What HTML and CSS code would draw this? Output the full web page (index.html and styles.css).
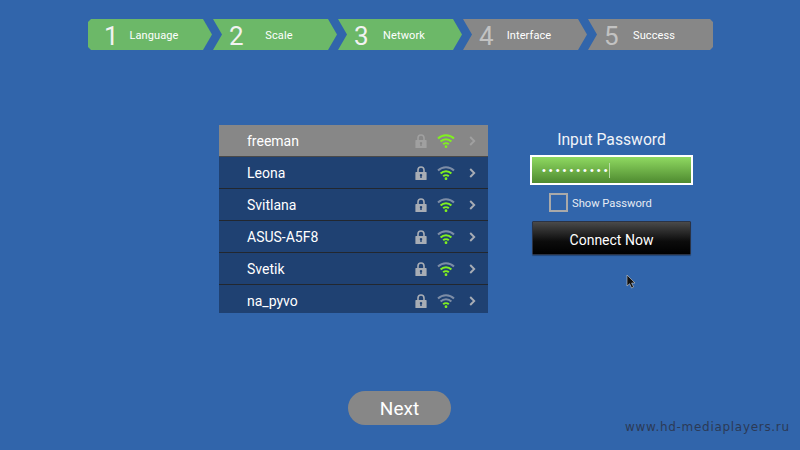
FILE: index.html
```html
<!DOCTYPE html>
<html lang="en">
<head>
    <meta charset="UTF-8">
    <title>Network setup</title>
    <link rel="stylesheet" href="styles.css">
</head>
<body>
    <svg class="defs" width="0" height="0">
        <symbol id="lock" viewBox="0 0 12 14">
            <path d="M3 6V4a3 3 0 0 1 6 0v2" fill="none" stroke="currentColor" stroke-width="1.6"/>
            <path fill-rule="evenodd" d="M1 6h10a.6.6 0 0 1 .6.6v6.800a.6.6 0 0 1-.6.6H1a.6.6 0 0 1-.6-.6V6.600A.6.6 0 0 1 1 6zM6 8a1.200 1.200 0 0 0-.7 2.200V12h1.400v-1.800A1.200 1.200 0 0 0 6 8z" fill="currentColor"/>
        </symbol>
        <symbol id="chev" viewBox="0 0 7 10">
            <path d="M1.200 1l4 4-4 4" fill="none" stroke="currentColor" stroke-width="1.900"/>
        </symbol>
    </svg>

    <div class="steps">
        <div class="step done"><span class="num">1</span><span class="label">Language</span></div>
        <div class="step done"><span class="num">2</span><span class="label">Scale</span></div>
        <div class="step done"><span class="num">3</span><span class="label">Network</span></div>
        <div class="step"><span class="num">4</span><span class="label">Interface</span></div>
        <div class="step last"><span class="num">5</span><span class="label">Success</span></div>
    </div>

    <div class="main">
        <ul class="wifi-list">
            <li class="active">
                <span class="name">freeman</span>
                <svg class="lock"><use href="#lock"/></svg>
                <svg class="wifi" viewBox="0 0 18 14"><path class="arc on" d="M1 4.500a11.500 11.500 0 0 1 16 0"/><path class="arc on" d="M3.600 7.500a7.600 7.600 0 0 1 10.800 0"/><path class="arc on" d="M6.200 10.300a4 4 0 0 1 5.600 0"/><circle class="dot" cx="9" cy="12.700" r="1.400"/></svg>
                <svg class="chev"><use href="#chev"/></svg>
            </li>
            <li>
                <span class="name">Leona</span>
                <svg class="lock"><use href="#lock"/></svg>
                <svg class="wifi" viewBox="0 0 18 14"><path class="arc" d="M1 4.500a11.500 11.500 0 0 1 16 0"/><path class="arc on" d="M3.600 7.500a7.600 7.600 0 0 1 10.800 0"/><path class="arc on" d="M6.200 10.300a4 4 0 0 1 5.600 0"/><circle class="dot" cx="9" cy="12.700" r="1.400"/></svg>
                <svg class="chev"><use href="#chev"/></svg>
            </li>
            <li>
                <span class="name">Svitlana</span>
                <svg class="lock"><use href="#lock"/></svg>
                <svg class="wifi" viewBox="0 0 18 14"><path class="arc" d="M1 4.500a11.500 11.500 0 0 1 16 0"/><path class="arc on" d="M3.600 7.500a7.600 7.600 0 0 1 10.800 0"/><path class="arc on" d="M6.200 10.300a4 4 0 0 1 5.600 0"/><circle class="dot" cx="9" cy="12.700" r="1.400"/></svg>
                <svg class="chev"><use href="#chev"/></svg>
            </li>
            <li>
                <span class="name">ASUS-A5F8</span>
                <svg class="lock"><use href="#lock"/></svg>
                <svg class="wifi" viewBox="0 0 18 14"><path class="arc" d="M1 4.500a11.500 11.500 0 0 1 16 0"/><path class="arc on" d="M3.600 7.500a7.600 7.600 0 0 1 10.800 0"/><path class="arc on" d="M6.200 10.300a4 4 0 0 1 5.600 0"/><circle class="dot" cx="9" cy="12.700" r="1.400"/></svg>
                <svg class="chev"><use href="#chev"/></svg>
            </li>
            <li>
                <span class="name">Svetik</span>
                <svg class="lock"><use href="#lock"/></svg>
                <svg class="wifi" viewBox="0 0 18 14"><path class="arc" d="M1 4.500a11.500 11.500 0 0 1 16 0"/><path class="arc on" d="M3.600 7.500a7.600 7.600 0 0 1 10.800 0"/><path class="arc on" d="M6.200 10.300a4 4 0 0 1 5.600 0"/><circle class="dot" cx="9" cy="12.700" r="1.400"/></svg>
                <svg class="chev"><use href="#chev"/></svg>
            </li>
            <li>
                <span class="name">na_pyvo</span>
                <svg class="lock"><use href="#lock"/></svg>
                <svg class="wifi" viewBox="0 0 18 14"><path class="arc" d="M1 4.500a11.500 11.500 0 0 1 16 0"/><path class="arc" d="M3.600 7.500a7.600 7.600 0 0 1 10.800 0"/><path class="arc on" d="M6.200 10.300a4 4 0 0 1 5.600 0"/><circle class="dot" cx="9" cy="12.700" r="1.400"/></svg>
                <svg class="chev"><use href="#chev"/></svg>
            </li>
        </ul>

        <div class="panel">
            <div class="panel-title">Input Password</div>
            <div class="pass-field"><span class="dots">••••••••••</span><span class="caret"></span></div>
            <div class="show-row"><span class="checkbox"></span><span class="show-text">Show Password</span></div>
            <div class="connect-btn">Connect Now</div>
        </div>
    </div>

    <div class="next-btn">Next</div>

    <svg class="pointer" width="11" height="16" viewBox="0 0 11 16"><path d="M1 1v11l2.600-2.300 2 4.300 2-1-2-4h3.400z" fill="#111" stroke="#ccc" stroke-width=".6"/></svg>
    <div class="watermark">www.hd-mediaplayers.ru</div>
</body>
</html>
```

FILE: styles.css
```css
body {
    margin: 0;
    width: 800px;
    height: 450px;
    overflow: hidden;
    position: relative;
    background: #3165ab;
    color: #fff;
    font-family: Roboto, sans-serif;
    display: flex;
    flex-direction: column;
    align-items: flex-start;
}
.defs { position: absolute; }

/* top wizard */
.steps {
    display: flex;
    margin: 19px 0 0 88px;
}
.step {
    width: 125px;
    height: 31px;
    box-sizing: border-box;
    padding-top: 2px;
    display: flex;
    align-items: center;
    background: #878787;
    clip-path: polygon(0 0, 115px 0, 124px 50%, 115px 100%, 0 100%, 9px 50%);
    font-size: 11px;
}
.step.done { background: #6cb868; }
.step:first-child {
    clip-path: polygon(3px 0, 115px 0, 124px 50%, 115px 100%, 3px 100%, 0 calc(100% - 3px), 0 3px);
}
.step.last {
    clip-path: polygon(0 0, 122px 0, 125px 3px, 125px 28px, 122px 100%, 0 100%, 9px 50%);
}
.num {
    width: 32px;
    padding-left: 16px;
    box-sizing: border-box;
    font-size: 26px;
    color: #f2f2f2;
}
.step:not(.done) .num { color: #c2c2c2; }
.label {
    flex: 0 0 70px;
    margin-left: -1px;
    text-align: center;
    letter-spacing: 0.1px;
}

/* network list + password */
.main {
    display: flex;
    align-items: flex-start;
    margin: 75px 0 0 219px;
}
.wifi-list {
    list-style: none;
    margin: 0;
    padding: 0;
    width: 269px;
    height: 188px;
    overflow: hidden;
}
.wifi-list li {
    height: 31px;
    border-bottom: 1px solid #22272f;
    background: #1f4172;
    display: flex;
    align-items: center;
    padding-left: 28px;
    color: #a8adb5;
}
.wifi-list li.active {
    background: #878787;
    border-bottom-color: #4a4a4a;
    color: #a0a0a0;
}
.name {
    flex: 1;
    padding-top: 1px;
    font-size: 14px;
    color: #fff;
}
.lock { width: 12px; height: 14px; }
.wifi { width: 18px; height: 14px; margin-left: 10px; }
.chev { width: 7px; height: 10px; margin: 0 12px 0 14px; }
.arc { fill: none; stroke: #7d8da6; stroke-width: 2; }
.arc.on { stroke: #80f020; }
.dot { fill: #80f020; }

.panel {
    width: 163px;
    margin-left: 42px;
    display: flex;
    flex-direction: column;
    align-items: center;
}
.panel-title {
    font-size: 15.7px;
    line-height: 18px;
    margin: 6px 0 6px;
    color: #f0f3f8;
}
.pass-field {
    width: 163px;
    height: 30px;
    box-sizing: border-box;
    border: 2px solid #fff;
    background: linear-gradient(to bottom, #8fd961, #4e8a30);
    display: flex;
    align-items: center;
    padding-left: 10px;
}
.dots {
    font-size: 11px;
    letter-spacing: 3px;
    font-family: "Liberation Sans", sans-serif;
}
.caret {
    width: 1px;
    height: 15px;
    background: #b9dca6;
    margin-left: -2px;
}
.show-row {
    display: flex;
    align-items: center;
    align-self: flex-start;
    margin: 8px 0 0 19px;
    font-size: 11.2px;
    color: #e6ebf3;
}
.show-text { padding-top: 2px; }
.checkbox {
    width: 19px;
    height: 19px;
    box-sizing: border-box;
    border: 2px solid #a9a9a9;
    margin-right: 4px;
}
.connect-btn {
    width: 159px;
    height: 34px;
    box-sizing: border-box;
    margin-top: 9px;
    padding-top: 3px;
    border: 1px solid #2a3346;
    border-radius: 1px;
    background: linear-gradient(to bottom, #4a4a4a, #0c0c0c 60%, #000);
    box-shadow: 0 1px 1px rgba(0, 0, 0, 0.3);
    font-size: 14px;
    display: flex;
    align-items: center;
    justify-content: center;
}

.next-btn {
    width: 103px;
    height: 34px;
    margin: 78px 0 0 348px;
    border-radius: 17px;
    background: #878787;
    font-size: 19px;
    display: flex;
    align-items: center;
    justify-content: center;
}

.pointer {
    position: absolute;
    left: 626px;
    top: 274px;
}
.watermark {
    position: absolute;
    left: 625px;
    top: 420px;
    font-family: "DejaVu Sans", sans-serif;
    font-size: 12px;
    letter-spacing: 0.7px;
    color: #2c3a56;
}
```
